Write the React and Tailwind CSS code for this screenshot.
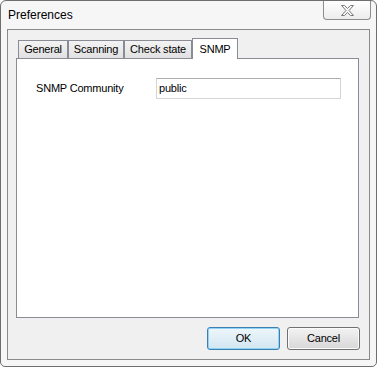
const tabs = [
  { label: "General", width: "w-[50px]" },
  { label: "Scanning", width: "w-[56px]" },
  { label: "Check state", width: "w-[68px]" },
];

function CloseGlyph() {
  return (
    <svg width="13" height="11" viewBox="0 0 13 11">
      <polygon
        points="0.5,0.5 3.5,0.5 6.5,3.5 9.5,0.5 12.5,0.5 8,5.5 12.5,10.5 9.5,10.5 6.5,7.5 3.5,10.5 0.5,10.5 5,5.5"
        fill="#f7f7f7"
        stroke="#7a7a7a"
        strokeWidth="1"
        strokeLinejoin="round"
      />
    </svg>
  );
}

export default function App() {
  return (
    <div className="h-[367px] w-[377px] bg-white font-['Liberation_Sans',Arial,sans-serif] text-[11px] tracking-[-0.2px] text-black">
      <div className="relative flex h-full w-full flex-col rounded-t-[6px] rounded-b-[5px] border border-[#6e6e6e] bg-[#f6f6f6]">
        <div className="flex h-[28px] shrink-0 items-center pl-[7px] text-[12px] tracking-normal">
          Preferences
        </div>

        <button
          type="button"
          className="absolute right-[5px] top-0 flex h-[19px] w-[48px] items-center justify-center rounded-b-[4px] border border-t-0 border-[#8d8d8d] bg-gradient-to-b from-[#ffffff] to-[#ececec]"
        >
          <CloseGlyph />
        </button>

        <div className="ml-[6px] flex h-[331px] w-[363px] flex-col border border-[#8a8a8a] bg-[#f0f0f0]">
          <div className="ml-[8px] mt-[8px] flex items-end pl-[2px]">
            {tabs.map((tab) => (
              <div
                key={tab.label}
                className={`${tab.width} flex h-[18px] items-center justify-center border border-b-0 border-[#898c95] bg-gradient-to-b from-[#f3f3f3] to-[#e1e1e1]`}
              >
                {tab.label}
              </div>
            ))}
            <div className="relative z-10 -mb-px flex h-[21px] w-[46px] items-start justify-center border border-b-0 border-[#898c95] bg-white pt-[2px]">
              SNMP
            </div>
          </div>

          <div className="ml-[8px] h-[260px] w-[343px] border border-[#898c95] bg-white">
            <div className="ml-[19px] mt-[19px] flex items-center">
              <span className="w-[120px]">SNMP Community</span>
              <div className="flex h-[21px] w-[185px] items-center border border-[#d5d5d5] border-t-[#acacac] bg-white pl-[2px]">
                public
              </div>
            </div>
          </div>

          <div className="mr-[9px] mt-[9px] flex justify-end gap-[7px]">
            <button
              type="button"
              className="flex h-[23px] w-[73px] items-center justify-center rounded-[3px] border border-[#3c7fb1] bg-gradient-to-b from-[#eef6fb] to-[#d3e6f1] shadow-[inset_0_0_0_1px_#8fd3f5]"
            >
              OK
            </button>
            <button
              type="button"
              className="flex h-[23px] w-[73px] items-center justify-center rounded-[3px] border border-[#707070] bg-gradient-to-b from-[#f3f3f3] to-[#d7d7d7] shadow-[inset_0_0_0_1px_#fbfbfb]"
            >
              Cancel
            </button>
          </div>
        </div>
      </div>
    </div>
  );
}
